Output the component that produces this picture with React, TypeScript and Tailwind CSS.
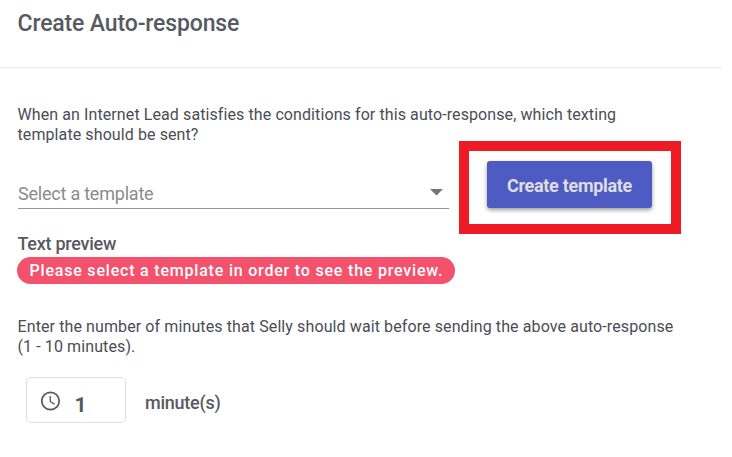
export default function App() {
  return (
    <main className="h-[457px] w-[732px] overflow-hidden bg-white font-['Roboto',sans-serif] text-[16px] leading-5 text-[#4b4d55]">
      <header className="h-[68px] w-[722px] border-b border-[#e9e9ec] pt-[9px] pl-[17.5px]">
        <h1 className="text-[23px] leading-[29px] font-medium tracking-[-0.14px] text-[#575962]">Create Auto-response</h1>
      </header>

      <section className="pt-[37px] pl-[17px]">
        <p className="w-[640px] pl-[0.5px] tracking-[0.095px]">
          When an Internet Lead satisfies the conditions for this auto-response, which texting
          <br />
          template should be sent?
        </p>

        <div className="-mt-1 flex items-start">
          <button className="mt-9 ml-px flex h-8 w-[431px] items-center justify-between border-b border-[#949494] pt-0.5 pr-1.5 text-left text-[18px] tracking-[-0.22px] text-[#8b8b8b]">
            Select a template
            <svg className="-mt-0.5 h-[7px] w-[13px]" viewBox="0 0 13 7">
              <path d="M0 0h13L6.500 6.500z" fill="#757575" />
            </svg>
          </button>
          <div className="ml-[10px] h-[93px] w-[222px] border-10 border-[#ed1c24] pt-[10px] pl-[18px]">
            <button className="h-[47px] w-[165px] rounded-[3px] bg-[#4e5bc2] pt-0.5 text-[18px] font-bold tracking-[-0.3px] text-[#dedee2] shadow-[0_2px_4px_rgba(0,0,0,0.4)]">
              Create template
            </button>
          </div>
        </div>

        <h2 className="pl-[0.5px] text-[18px] font-medium tracking-[-0.26px] text-[#575962]">Text preview</h2>
        <p className="mt-[3px] flex h-[27px] w-[438px] items-center rounded-full bg-[#f4516c] pl-[12.5px] text-[16px] font-medium tracking-[0.8px] whitespace-nowrap text-white">
          Please select a template in order to see the preview.
        </p>

        <p className="mt-[33px] pl-[0.5px] tracking-[0.105px]">
          Enter the number of minutes that Selly should wait before sending the above auto-response
          <br />
          (1 - 10 minutes).
        </p>

        <div className="mt-5 ml-[9px] flex items-center">
          <label className="flex h-[46px] w-[100px] items-center rounded-[5px] border border-[#dedede] pl-[14px]">
            <svg className="mt-[2px] size-[20px]" viewBox="0 0 20 20" fill="none" stroke="#575962">
              <circle cx="9.500" cy="10" r="8.700" strokeWidth="1.700" />
              <path d="M9.300 5v5.500l4.300 2.600" strokeWidth="1.300" />
            </svg>
            <span className="ml-[13.500px] pt-2.5 text-[21px] font-bold text-[#575962]">1</span>
          </label>
          <span className="ml-[19px] pt-1.5 text-[18px] font-medium tracking-[-0.25px] text-[#575962]">minute(s)</span>
        </div>
      </section>
    </main>
  );
}
